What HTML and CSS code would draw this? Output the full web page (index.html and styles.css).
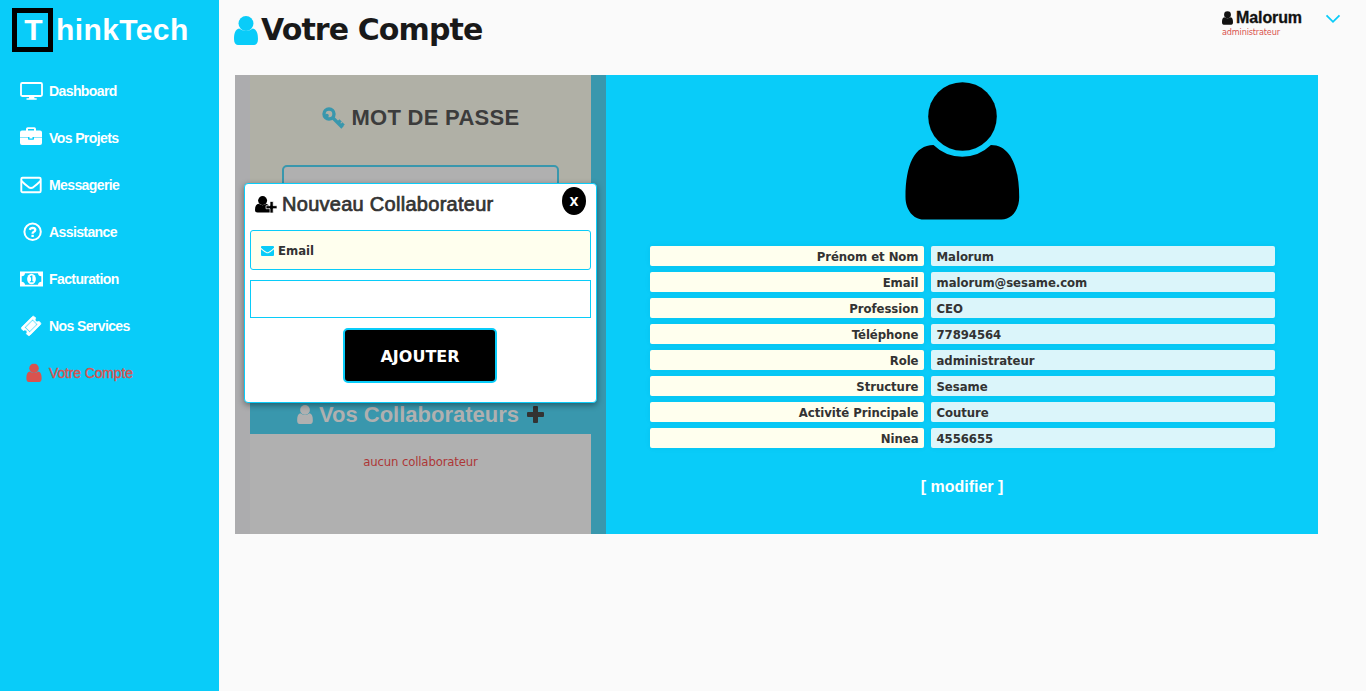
FILE: index.html
```html
<!DOCTYPE html>
<html lang="fr">
<head>
<meta charset="utf-8">
<title>ThinkTech - Votre Compte</title>
<link rel="stylesheet" href="styles.css">
</head>
<body>
<svg class="defs" width="0" height="0">
  <symbol id="user" viewBox="0 0 114 138"><circle cx="57" cy="34.5" r="34.3"/><path d="M28 63Q40 74.7 56.7 74.7T85.4 63C104 63 113.7 83 113.7 115C113.7 128 106 137.5 96 137.5H18C8 137.5 0 128 0 115C0 83 9 63 28 63z"/></symbol>
  <symbol id="user-small" viewBox="0 0 114 138"><circle cx="57" cy="35.500" r="35.500"/><path d="M24 60Q40 71 57 71T90 60C108 64 114 83 114 110C114 128 108 138 96 138H18C6 138 0 128 0 110C0 83 6 64 24 60z"/></symbol>
</svg>
<div class="app">
  <aside class="sidebar">
    <div class="logo"><span class="logo-box">T</span><span class="logo-rest">hinkTech</span></div>
    <nav class="nav">
      <a class="nav-item"><svg class="nav-icon" viewBox="0 0 24 22"><rect x="1" y="3" width="21" height="13" rx="1.2" fill="none" stroke="currentColor" stroke-width="1.8"/><path d="M9.5 16h4.500l.5 2.300h2.200v1.500H6.500v-1.500h2.300z"/></svg><span>Dashboard</span></a>
      <a class="nav-item"><svg class="nav-icon" viewBox="0 0 24 22"><path d="M6 3.500V2Q6 .3 7.700.3h6.600Q16 .3 16 2v1.500h4q2 0 2 2V10H0V5.500q0-2 2-2zm2 0h6V2H8zM0 10.500h8v1.400q0 .8.800.8h4.400q.8 0 .8-.8v-1.400h8V16q0 2-2 2H2q-2 0-2-2zm9.500-.5h3v1.500h-3z" fill-rule="evenodd"/></svg><span>Vos Projets</span></a>
      <a class="nav-item"><svg class="nav-icon" viewBox="0 0 24 22"><g fill="none" stroke="currentColor" stroke-width="1.900"><rect x="1.300" y="3.800" width="19.400" height="14.500" rx="1.300"/><path d="M1.500 7Q5 10.500 8.500 13.100Q11 14.800 13.500 13.100Q17 10.500 20.500 7"/></g></svg><span>Messagerie</span></a>
      <a class="nav-item"><svg class="nav-icon" viewBox="0 0 24 22"><g fill="none" stroke="currentColor"><circle cx="12.600" cy="10.800" r="8.200" stroke-width="2"/><path d="M9.800 8.800Q10.400 6.800 12.600 6.800Q15.400 7 15.300 9Q15.200 10.300 13.600 11Q12.600 11.500 12.600 12.800" stroke-width="2.300"/></g><rect x="11.400" y="13.800" width="2.400" height="2.200"/></svg><span>Assistance</span></a>
      <a class="nav-item"><svg class="nav-icon" viewBox="0 0 24 22"><path fill-rule="evenodd" d="M0 3.500h23v15H0zM5 5.200Q4.800 8 1.700 8.300v5.400Q4.800 14 5 16.800h13Q18.200 14 21.300 13.700V8.300Q18.200 8 18 5.200z"/><ellipse cx="11.500" cy="11" rx="4.400" ry="5.200"/><path class="cut" d="M10 8.600l1.300-1h1.100v5.700h1v1H9.900v-1h1.100V9.200l-.7.400z"/></svg><span>Facturation</span></a>
      <a class="nav-item"><svg class="nav-icon" viewBox="0 0 24 22"><g transform="translate(.8 .6) scale(.0115)"><path d="M1024 452l316 316-572 572-316-316zm-211 979l618-618q19-19 19-45t-19-45l-362-362q-18-18-45-18t-45 18l-618 618q-19 19-19 45t19 45l362 362q18 18 45 18t45-18zm889-637l-907 908q-37 37-90.500 37t-90.500-37l-126-126q56-56 56-136t-56-136-136-56-136 56l-125-126q-37-37-37-90.500t37-90.500l907-906q37-37 90.500-37t90.500 37l125 125q-56 56-56 136t56 136 136 56 136-56l126 125q37 37 37 90.500t-37 90.500z" stroke="currentColor" stroke-width="70"/></g></svg><span>Nos Services</span></a>
      <a class="nav-item active"><svg class="nav-icon" viewBox="0 0 24 22"><use href="#user-small" x="6" y="1.500" width="16" height="18.500"/></svg><span>Votre Compte</span></a>
    </nav>
  </aside>
  <main class="main">
    <header class="header">
      <h1 class="title"><svg class="title-icon"><use href="#user-small"/></svg><span>Votre Compte</span></h1>
      <div class="session">
        <div>
          <div class="session-name"><svg class="session-icon"><use href="#user-small"/></svg><span>Malorum</span></div>
          <div class="session-role">administrateur</div>
        </div>
        <svg class="chevron" viewBox="0 0 16 10"><path d="M1.500 1.300L8 7.800L14.500 1.300" fill="none" stroke="currentColor" stroke-width="1.800"/></svg>
      </div>
    </header>
    <section class="account">
      <div class="left">
        <div class="password">
          <h2 class="section-title"><svg class="key" viewBox="0 0 23 23"><g fill="none" stroke="currentColor"><circle cx="7" cy="7" r="5" stroke-width="3.400"/><path d="M10.500 10.500L20.500 20.500M16 16l2.600-2.600M19 19l2.600-2.600" stroke-width="3.300"/></g><circle cx="4.800" cy="8.800" r="2"/></svg><span>MOT DE PASSE</span></h2>
          <div class="password-input"></div>
        </div>
        <h2 class="collab-head"><svg class="collab-icon"><use href="#user-small"/></svg><span>Vos Collaborateurs</span><svg class="plus" viewBox="0 0 17 17"><path d="M6 1q0-1 1-1h3q1 0 1 1v5h5q1 0 1 1v3q0 1-1 1h-5v5q0 1-1 1H7q-1 0-1-1v-5H1q-1 0-1-1V7q0-1 1-1h5z"/></svg></h2>
        <div class="collab-empty">aucun collaborateur</div>
        <div class="modal">
          <div class="modal-head"><svg class="user-plus" viewBox="0 0 22 17"><circle cx="7.600" cy="4.600" r="4.500"/><path d="M3.800 7.800Q7.600 10.600 11.400 7.800L13.500 9V9.500H14V13h1.500v3.500H2.500Q0 16.500 0 14Q0 8 3.800 7.800z"/><path d="M15 5.500h3.200v4.200H22v3h-3.800V17H15v-4.300h-4v-3h4z" stroke="#fff" stroke-width=".7"/></svg><span class="modal-title">Nouveau Collaborateur</span><button class="close">X</button></div>
          <div class="email-label"><svg class="mail" viewBox="0 0 13 10"><path d="M0 1q0-1 1-1h11q1 0 1 1v.700Q10 4.800 7.500 5.900q-1 .5-2 0Q3 4.800 0 1.700zM0 3.300Q3 6 5.300 7q1.200.5 2.400 0Q10 6 13 3.300V9q0 1-1 1H1Q0 10 0 9z"/></svg><span>Email</span></div>
          <div class="email-input"></div>
          <button class="add">AJOUTER</button>
        </div>
      </div>
      <div class="profile">
        <svg class="avatar"><use href="#user"/></svg>
        <dl class="fields">
          <dt>Prénom et Nom</dt><dd>Malorum</dd>
          <dt>Email</dt><dd>malorum@sesame.com</dd>
          <dt>Profession</dt><dd>CEO</dd>
          <dt>Téléphone</dt><dd>77894564</dd>
          <dt>Role</dt><dd>administrateur</dd>
          <dt>Structure</dt><dd>Sesame</dd>
          <dt>Activité Principale</dt><dd>Couture</dd>
          <dt>Ninea</dt><dd>4556655</dd>
        </dl>
        <a class="edit">[ modifier ]</a>
      </div>
    </section>
  </main>
</div>
</body>
</html>
```
FILE: styles.css
```css
* { box-sizing: border-box; }
body { margin: 0; background: #fafafa; color: #333; font-family: "Liberation Sans", Arial, sans-serif; overflow: hidden; }
svg { fill: currentColor; flex: none; display: block; }
.defs { position: absolute; }
h1, h2, dl, dd { margin: 0; }
.app { display: flex; height: 691px; }
.sidebar { width: 219px; flex: none; background: #09ccf9; color: #fff; }
.logo { display: flex; height: 67px; padding: 8px 0 0 12px; font-size: 30px; font-weight: bold; line-height: 34px; }
.logo-box { width: 41px; height: 44px; border: 5px solid #000; text-align: center; padding-left: 2px; }
.logo-rest { padding: 5px 0 0 3px; letter-spacing: 0.4px; }
.nav-item { display: flex; align-items: center; height: 47px; padding-left: 20px; gap: 5px; font-size: 14px; font-weight: bold; letter-spacing: -0.6px; }
.nav-icon { width: 24px; height: 22px; }
.cut { fill: #09ccf9; }
.active { color: #d9534f; font-weight: normal; letter-spacing: -0.15px; -webkit-text-stroke: .4px; }
.main { flex: 1; padding-left: 15px; }
.header { display: flex; justify-content: space-between; height: 75px; }
.title { display: flex; align-items: flex-start; gap: 3px; color: #191919; font-family: "DejaVu Sans", sans-serif; font-size: 30px; line-height: 35px; padding-top: 12px; letter-spacing: -0.9px; }
.title-icon { width: 24px; height: 29px; margin-top: 4px; color: #09ccf9; }
.session { display: flex; align-items: flex-start; gap: 23px; padding: 9px 25px 0 0; }
.session-name { display: flex; align-items: center; gap: 3px; color: #111; font-size: 16px; font-weight: bold; line-height: 17px; letter-spacing: -0.1px; -webkit-text-stroke: .3px; }
.session-icon { width: 11px; height: 14px; }
.session-role { color: #d9534f; font-family: "DejaVu Sans Condensed", sans-serif; font-size: 9px; line-height: 12px; letter-spacing: -0.15px; }
.chevron { width: 16px; height: 10px; margin-top: 5px; color: #09ccf9; }
.account { display: flex; width: 1083px; height: 459px; margin-left: 1px; background: #09ccf9; }
.left { position: relative; width: 371px; padding: 0 15px; background: linear-gradient(to right, #acacae 15px, #3997ad 15px); display: flex; flex-direction: column; }
.password { height: 320px; background: #b0b0a6; padding-top: 30px; }
.section-title { display: flex; align-items: center; justify-content: center; gap: 7px; font-size: 22px; line-height: 26px; color: #3c3c3c; letter-spacing: .28px; }
.key { width: 23px; height: 23px; margin-top: 1px; color: #3997ad; }
.password-input { height: 50px; margin: 34px 32px 0; border: 2px solid #3997ad; border-radius: 5px; background: #b0b0b0; }
.collab-head { display: flex; align-items: center; justify-content: center; height: 39px; gap: 6px; font-size: 22px; color: #b0b0b0; }
.collab-icon { width: 16px; height: 19px; }
.plus { width: 17px; height: 17px; margin-left: 2px; color: #333; }
.collab-empty { flex: 1; background: #b0b0b0; color: #ad3737; font-family: "DejaVu Sans Condensed", sans-serif; font-size: 13px; line-height: 18px; text-align: center; padding-top: 19px; letter-spacing: -.15px; }
.modal { position: absolute; left: 9px; top: 108px; width: 353px; height: 220px; padding: 0 5px; background: #fff; border: 1px solid #09ccf9; border-radius: 4px; box-shadow: 0 2px 6px rgba(0, 0, 0, .4); }
.modal-head { display: flex; align-items: flex-start; height: 46px; padding: 3px 5px 0 5px; }
.user-plus { width: 22px; height: 17px; margin-top: 9px; color: #000; }
.modal-title { flex: 1; padding-left: 5px; font-size: 20px; font-weight: 500; line-height: 34px; letter-spacing: .28px; -webkit-text-stroke: .7px; }
.close { width: 24px; height: 28px; padding: 0; border: 0; border-radius: 50%; background: #000; color: #fff; font: bold 13px "DejaVu Sans Condensed", sans-serif; }
.email-label { display: flex; align-items: center; gap: 4px; height: 40px; padding-left: 10px; border: 1px solid #09ccf9; border-radius: 3px; background: #ffe; font: bold 13px "DejaVu Sans Condensed", sans-serif; }
.mail { width: 13px; height: 10px; margin-top: 1px; color: #09ccf9; }
.email-input { height: 38px; margin-top: 10px; border: 1px solid #09ccf9; }
.add { display: block; width: 154px; height: 55px; margin: 10px 0 0 93px; padding: 2px 6px 1px; border: 2px solid #09ccf9; border-radius: 5px; background: #000; color: #fff; font: bold 16px "DejaVu Sans", sans-serif; }
.profile { flex: 1; display: flex; flex-direction: column; align-items: center; padding-top: 7px; }
.avatar { width: 115px; height: 138px; color: #000; }
.fields { display: grid; grid-template-columns: 274px 344px; gap: 6px 7px; width: 625px; margin-top: 26px; font: bold 13px/21px "DejaVu Sans Condensed", sans-serif; letter-spacing: -.05px; }
.fields dt { height: 20px; padding-right: 5px; border-radius: 2px; background: #ffe; text-align: right; box-shadow: 0 0 6px rgba(0, 0, 0, .05); }
.fields dd { height: 20px; padding-left: 6px; border-radius: 2px; background: #dbf5fa; box-shadow: 0 0 6px rgba(0, 0, 0, .05); }
.edit { margin-top: 29px; color: #fff; font-size: 16px; font-weight: bold; line-height: 20px; }
```
